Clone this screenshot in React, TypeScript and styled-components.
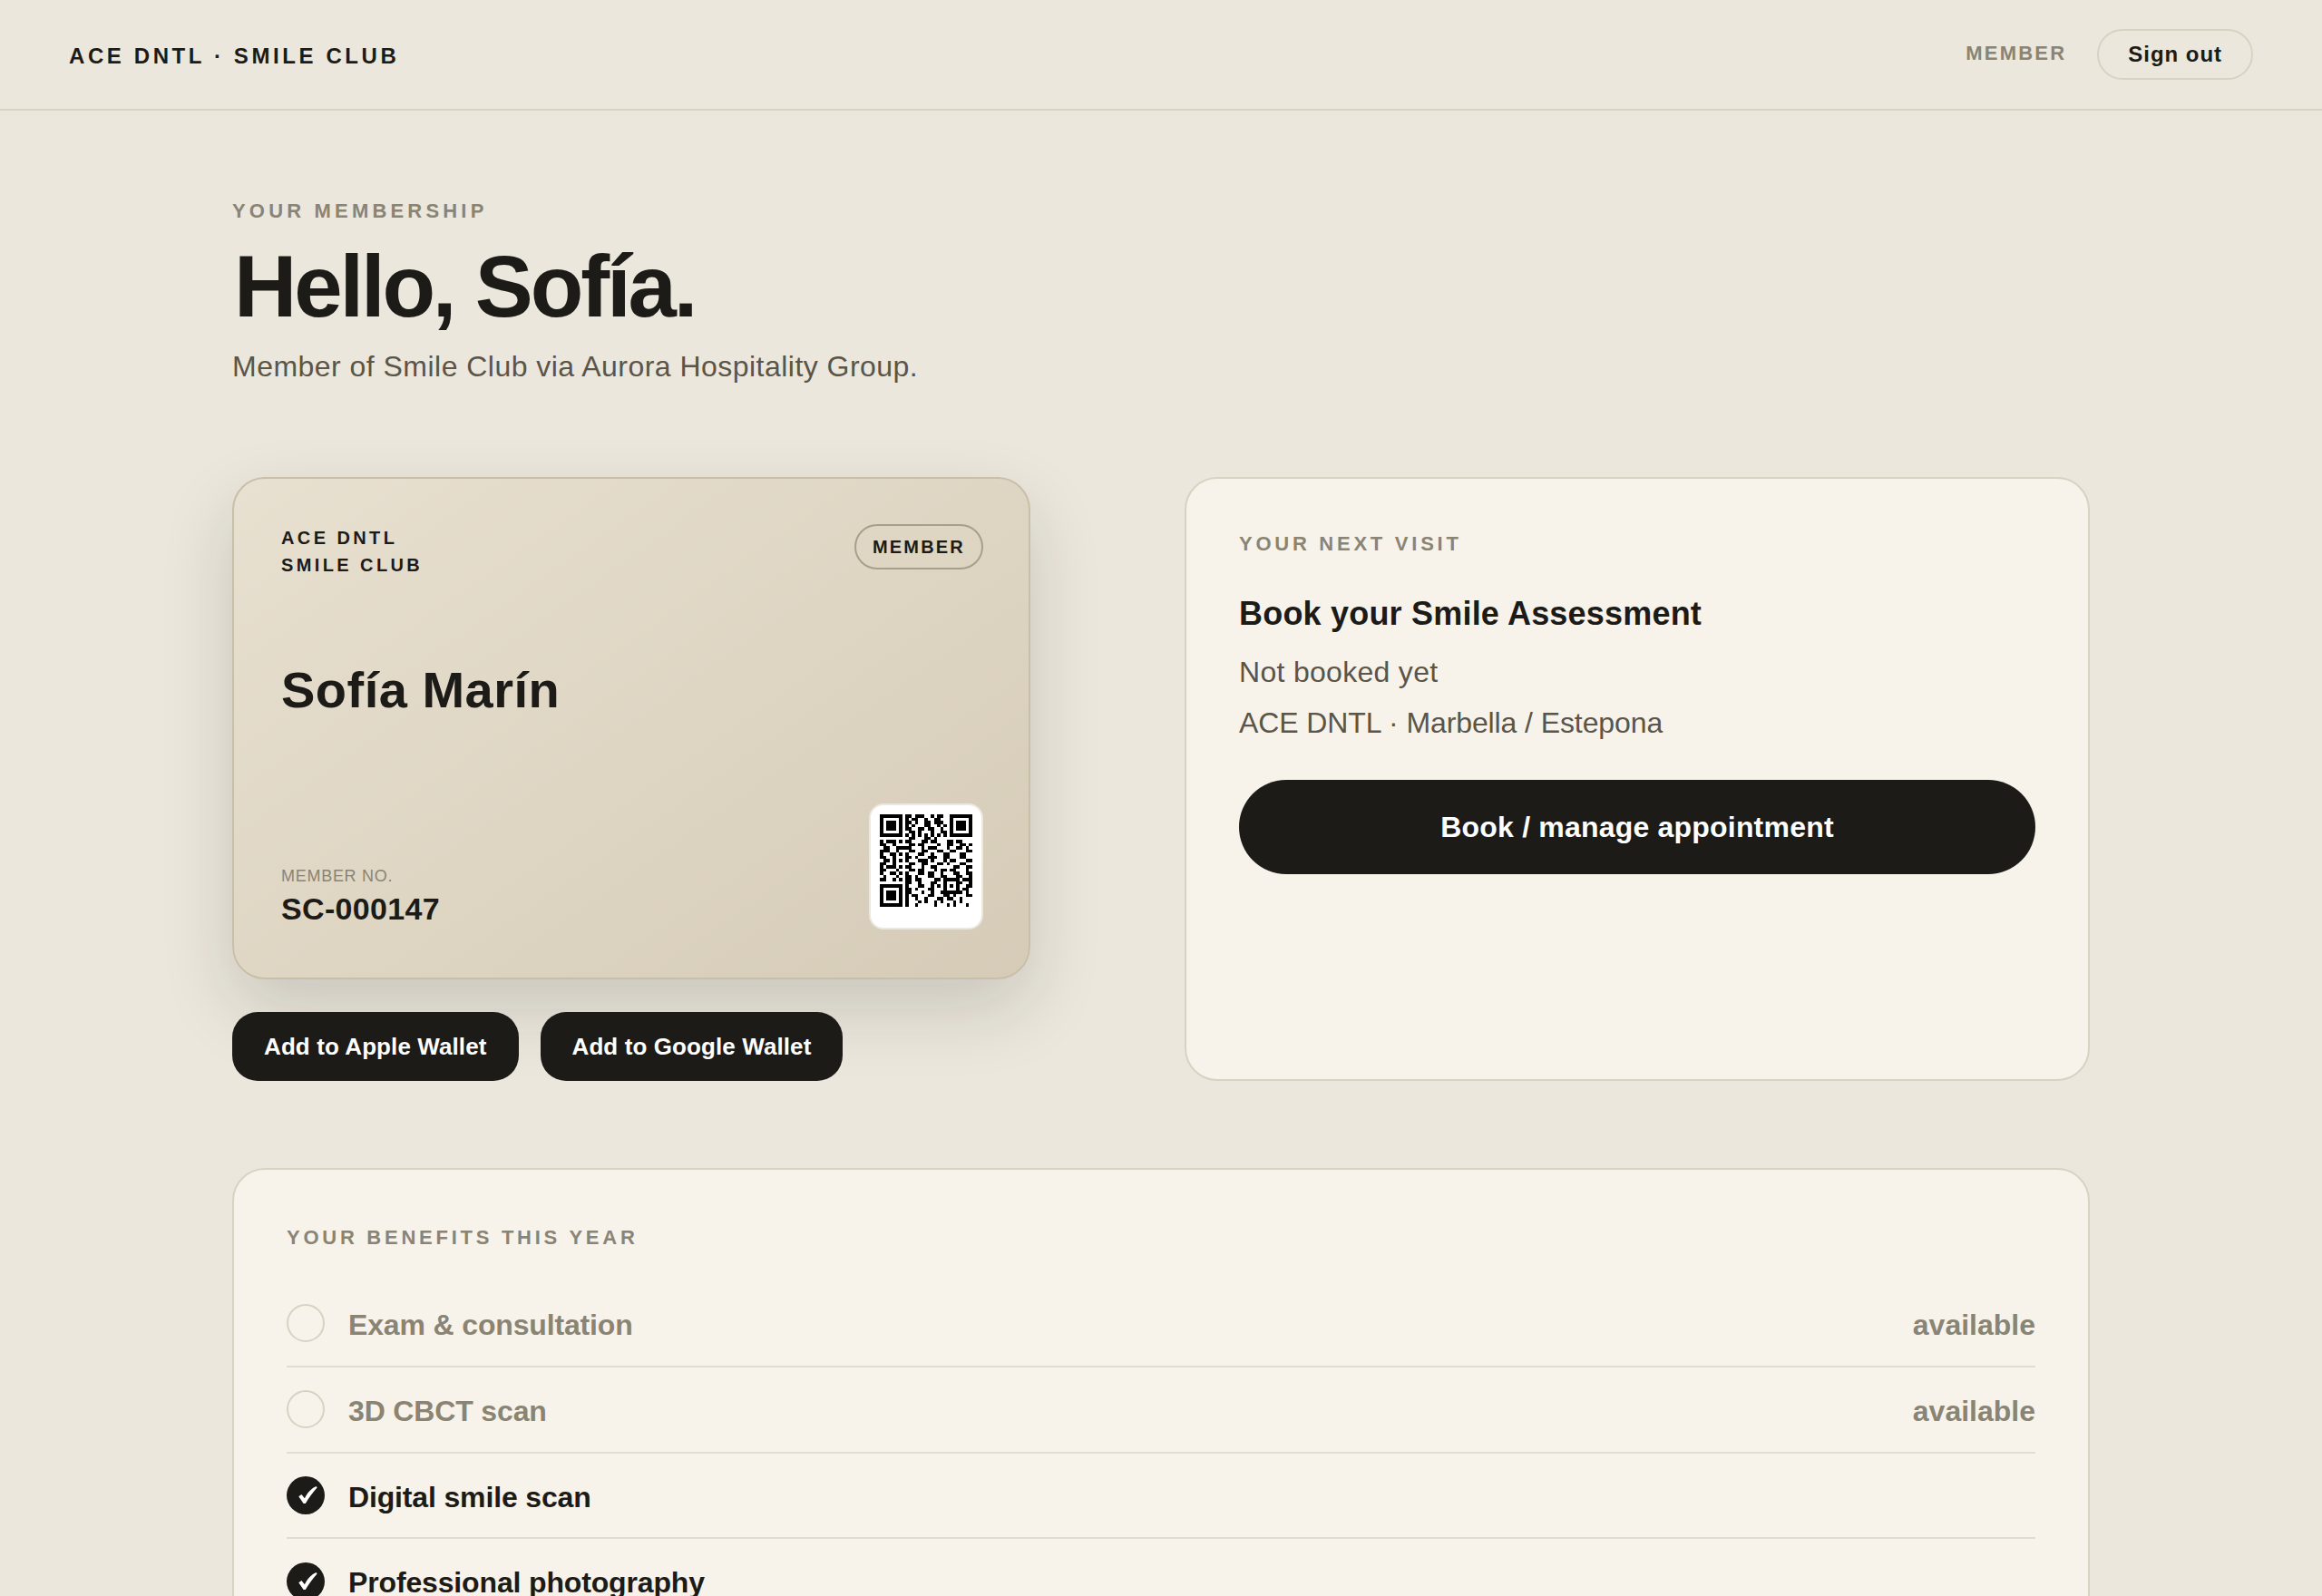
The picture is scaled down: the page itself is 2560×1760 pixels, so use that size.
import styled, { createGlobalStyle } from "styled-components";

const ink = "#1c1b17";
const body = "#5a5548";
const muted = "#8a8474";
const line = "#d9d2c3";

const GlobalStyle = createGlobalStyle`
  html, body {
    margin: 0;
    padding: 0;
    background: #ebe7dc;
  }
  body {
    font-family: "Liberation Sans", Arial, sans-serif;
    color: ${ink};
  }
  * {
    box-sizing: border-box;
  }
`;

const benefits = [
  { label: "Exam & consultation", status: "available", used: false },
  { label: "3D CBCT scan", status: "available", used: false },
  { label: "Digital smile scan", status: "", used: true },
  { label: "Professional photography", status: "", used: true },
];

const qrRows = [
  "........##.###..#.##.........",
  "........#.##..#..##..........",
  "........##.#..##.###.........",
  "........#.#...##..#.#........",
  "........##..##.##..#.........",
  ".........##.#...#..##........",
  "........#.#.#.#.#.#.#........",
  ".........##...##.#...........",
  "#.###.#.##...##.##...##.##...",
  "##..#....##.##....#..##..##.#",
  ".##..#.###...#.###...#..##.#.",
  "###..#...##..##...##..##...##",
  "#..##.#.#...##..#...##...##..",
  "##..#...##.#...###..##...##..",
  ".##.#.#.#...###.#...#.##...##",
  "##..#....##..##...##.#...##..",
  "#.###.#.##...#..##.....##..##",
  "##...#...##.##...#.##.##...#.",
  "#..##.#.#...##.##..#...##..##",
  ".#...#..##.#...##..##...##..#",
  "##..#.#.##.##....##.......###",
  "........##..#...##.....###..#",
  "........#...##..#.#.....#..##",
  "........##.#...##.......#.##.",
  "........##...#..#..#....##.#.",
  "........#.##...##...##.#...##",
  "........#..#..#...##.##..#...",
  "........#...#.#..#.#...#.#...",
  "........#..#.....#...#.#...#.",
];

const finder = (row: number, col: number) => {
  const inBox = (top: number, left: number) => {
    const r = row - top;
    const c = col - left;
    if (r < 0 || c < 0 || r > 6 || c > 6) return false;
    return r === 0 || r === 6 || c === 0 || c === 6 || (r >= 2 && r <= 4 && c >= 2 && c <= 4);
  };
  return inBox(0, 0) || inBox(0, 22) || inBox(22, 0);
};

const isDark = (row: number, col: number) => {
  if (row < 8 && (col < 8 || col > 20)) return finder(row, col);
  if (row > 20 && col < 8) return finder(row, col);
  if (row === 6) return col % 2 === 0;
  if (col === 6) return row % 2 === 0;
  if (row >= 20 && row <= 24 && col >= 20 && col <= 24) {
    return row === 20 || row === 24 || col === 20 || col === 24 || (row === 22 && col === 22);
  }
  return qrRows[row].charAt(col) === "#";
};

const QrCode = () => {
  let d = "";
  for (let r = 0; r < 29; r++) {
    for (let c = 0; c < 29; c++) {
      if (isDark(r, c)) d += `M${c} ${r}h1v1h-1z`;
    }
  }
  return (
    <QrImage viewBox="0 0 29 29" shapeRendering="crispEdges">
      <path d={d} fill="#000" />
    </QrImage>
  );
};

const App = () => {
  return (
    <Page>
      <GlobalStyle />
      <TopBar>
        <Brand>ACE DNTL · SMILE CLUB</Brand>
        <TopActions>
          <Role>MEMBER</Role>
          <SignOut>Sign out</SignOut>
        </TopActions>
      </TopBar>
      <Main>
        <Eyebrow>YOUR MEMBERSHIP</Eyebrow>
        <Greeting>Hello, Sofía.</Greeting>
        <Lead>Member of Smile Club via Aurora Hospitality Group.</Lead>
        <Columns>
          <div>
            <MemberCard>
              <CardTop>
                <CardBrand>
                  ACE DNTL
                  <br />
                  SMILE CLUB
                </CardBrand>
                <Pill>MEMBER</Pill>
              </CardTop>
              <MemberName>Sofía Marín</MemberName>
              <CardBottom>
                <div>
                  <NumberLabel>MEMBER NO.</NumberLabel>
                  <NumberValue>SC-000147</NumberValue>
                </div>
                <QrBox>
                  <QrCode />
                </QrBox>
              </CardBottom>
            </MemberCard>
            <WalletRow>
              <WalletButton>Add to Apple Wallet</WalletButton>
              <WalletButton>Add to Google Wallet</WalletButton>
            </WalletRow>
          </div>
          <VisitPanel>
            <SectionLabel>YOUR NEXT VISIT</SectionLabel>
            <VisitTitle>Book your Smile Assessment</VisitTitle>
            <VisitLine $tracking={0.3}>Not booked yet</VisitLine>
            <VisitLine $tracking={-0.1}>ACE DNTL · Marbella / Estepona</VisitLine>
            <BookButton>Book / manage appointment</BookButton>
          </VisitPanel>
        </Columns>
        <BenefitsPanel>
          <SectionLabel>YOUR BENEFITS THIS YEAR</SectionLabel>
          <BenefitList>
            {benefits.map((b) => (
              <BenefitRow key={b.label} $used={b.used}>
                <Tick $used={b.used}>
                  {b.used && (
                    <svg width="42" height="42" viewBox="0 0 42 42">
                      <path
                        d="M13.3 22.3L16.4 19.9L19.9 24.2C23 18.1 27.6 13.3 32.6 11.1L33.6 12.5C29 17.5 24.6 23.7 20.8 29.9H18.6Z"
                        fill="#fff"
                      />
                    </svg>
                  )}
                </Tick>
                <BenefitName>{b.label}</BenefitName>
                <BenefitStatus>{b.status}</BenefitStatus>
              </BenefitRow>
            ))}
          </BenefitList>
        </BenefitsPanel>
      </Main>
    </Page>
  );
};

const Page = styled.div`
  height: 1760px;
  overflow: hidden;
`;

const TopBar = styled.header`
  display: flex;
  align-items: center;
  justify-content: space-between;
  height: 122px;
  padding: 0 76px;
  border-bottom: 2px solid ${line};
`;

const Brand = styled.div`
  padding-top: 4px;
  font-size: 24px;
  font-weight: 700;
  letter-spacing: 0.15em;
`;

const TopActions = styled.div`
  display: flex;
  align-items: center;
  gap: 34px;
`;

const Role = styled.span`
  margin-bottom: 2px;
  font-size: 22px;
  font-weight: 700;
  letter-spacing: 0.1em;
  color: ${muted};
`;

const SignOut = styled.button`
  height: 56px;
  padding: 0 32px;
  border: 2px solid ${line};
  border-radius: 28px;
  background: transparent;
  font: 700 24px "Liberation Sans", Arial, sans-serif;
  letter-spacing: 0.04em;
  color: ${ink};
`;

const Main = styled.main`
  padding: 97px 256px 0;
`;

const Eyebrow = styled.div`
  font-size: 22px;
  line-height: 28px;
  font-weight: 700;
  letter-spacing: 0.19em;
  color: ${muted};
`;

const Greeting = styled.h1`
  margin: 19px 0 0;
  padding-left: 2px;
  font-size: 96px;
  line-height: 100px;
  font-weight: 700;
  letter-spacing: -0.033em;
`;

const Lead = styled.p`
  margin: 16px 0 0;
  font-size: 32px;
  line-height: 44px;
  letter-spacing: 0.47px;
  color: ${body};
`;

const Columns = styled.div`
  display: grid;
  grid-template-columns: 880px 1fr;
  gap: 170px;
  margin-top: 100px;
`;

const MemberCard = styled.div`
  display: flex;
  flex-direction: column;
  justify-content: space-between;
  height: 554px;
  padding: 50px 50px 53px 52px;
  border: 2px solid #c9bea8;
  border-radius: 36px;
  background: linear-gradient(145deg, #e8e0d0 0%, #d5cbb7 100%);
  box-shadow: 0 32px 80px rgba(28, 27, 23, 0.16);
`;

const CardTop = styled.div`
  display: flex;
  align-items: flex-start;
  justify-content: space-between;
`;

const CardBrand = styled.div`
  font-size: 20px;
  line-height: 30px;
  font-weight: 700;
  letter-spacing: 0.17em;
`;

const Pill = styled.span`
  display: flex;
  align-items: center;
  height: 50px;
  padding: 0 18px;
  border: 2px solid #a89e8a;
  border-radius: 25px;
  font-size: 20px;
  font-weight: 700;
  letter-spacing: 0.11em;
`;

const MemberName = styled.div`
  margin-bottom: 2px;
  font-size: 56px;
  line-height: 68px;
  font-weight: 700;
  letter-spacing: 0.5px;
`;

const CardBottom = styled.div`
  display: flex;
  align-items: flex-end;
  justify-content: space-between;
`;

const NumberLabel = styled.div`
  font-size: 18px;
  line-height: 24px;
  letter-spacing: 0.04em;
  color: ${muted};
`;

const NumberValue = styled.div`
  margin: 4px 0 3px;
  font-size: 34px;
  line-height: 40px;
  font-weight: 700;
  letter-spacing: 0.01em;
`;

const QrBox = styled.div`
  width: 126px;
  height: 139px;
  padding: 10px;
  border: 2px solid #ece8df;
  border-radius: 16px;
  background: #fff;
`;

const QrImage = styled.svg`
  display: block;
  width: 102px;
  height: 102px;
`;

const WalletRow = styled.div`
  display: flex;
  gap: 24px;
  margin-top: 36px;
`;

const WalletButton = styled.button`
  height: 76px;
  padding: 0 35px;
  border: 0;
  border-radius: 28px;
  background: ${ink};
  color: #fff;
  font: 700 26px "Liberation Sans", Arial, sans-serif;
  letter-spacing: 0.1px;
`;

const VisitPanel = styled.section`
  padding: 58px;
  border: 2px solid ${line};
  border-radius: 36px;
  background: #f7f3ea;
`;

const SectionLabel = styled.div`
  font-size: 22px;
  line-height: 28px;
  font-weight: 700;
  letter-spacing: 0.17em;
  color: ${muted};
`;

const VisitTitle = styled.h2`
  margin: 41px 0 20px;
  font-size: 36px;
  line-height: 44px;
  font-weight: 700;
  letter-spacing: 0.2px;
`;

const VisitLine = styled.p<{ $tracking: number }>`
  margin: 0 0 12px;
  font-size: 32px;
  line-height: 44px;
  letter-spacing: ${(p) => p.$tracking}px;
  color: ${body};
`;

const BookButton = styled.button`
  display: block;
  width: 100%;
  height: 104px;
  margin-top: 41px;
  border: 0;
  border-radius: 52px;
  background: ${ink};
  color: #fff;
  font: 700 32px "Liberation Sans", Arial, sans-serif;
  letter-spacing: 0.2px;
`;

const BenefitsPanel = styled.section`
  margin-top: 96px;
  padding: 61px 58px 60px;
  border: 2px solid ${line};
  border-radius: 36px;
  background: #f7f3ea;
`;

const BenefitList = styled.div`
  margin-top: 34px;
`;

const BenefitRow = styled.div<{ $used: boolean }>`
  display: flex;
  align-items: center;
  gap: 26px;
  padding: 24px 0;
  border-bottom: 2px solid #e2ddd2;
  font-size: 32px;
  line-height: 44.8px;
  font-weight: 700;
  color: ${(p) => (p.$used ? ink : muted)};
`;

const Tick = styled.span<{ $used: boolean }>`
  flex: none;
  width: 42px;
  height: 42px;
  border-radius: 50%;
  background: ${(p) => (p.$used ? ink : "transparent")};
  border: ${(p) => (p.$used ? "none" : `2px solid ${line}`)};

  svg {
    display: block;
  }
`;

const BenefitName = styled.span`
  flex: 1;
  margin: 2px 0 -2px;
  letter-spacing: -0.15px;
`;

const BenefitStatus = styled.span`
  margin: 2px 0 -2px;
  color: ${muted};
`;

export default App;
